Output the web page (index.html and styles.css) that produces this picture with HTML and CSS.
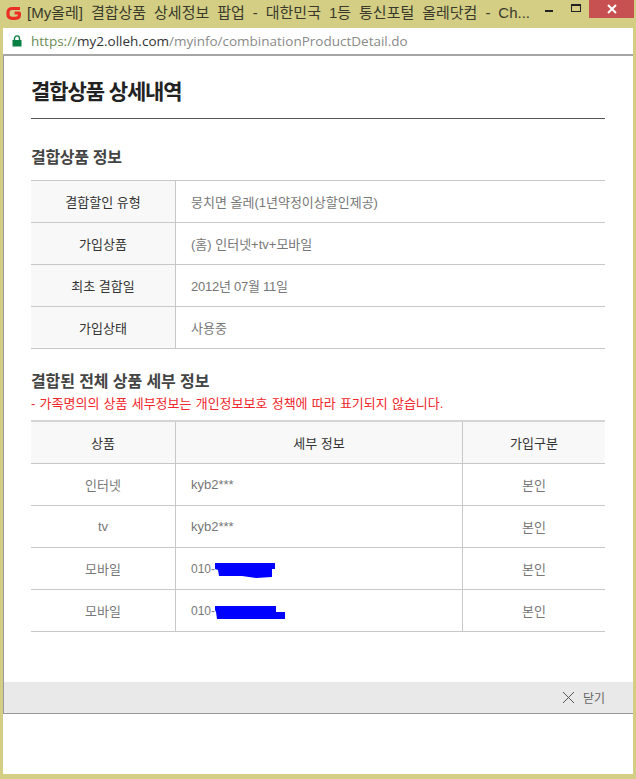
FILE: index.html
```html
<!DOCTYPE html>
<html lang="ko">
<head>
    <meta charset="UTF-8">
    <title>결합상품 상세내역</title>
    <link rel="stylesheet" href="styles.css">
</head>
<body>
<div class="window">
    <div class="titlebar">
        <svg class="app-icon" width="16" height="16" viewBox="0 0 16 16">
            <path d="M14 3.5H6.5Q2 3.5 2 7.5V9.5Q2 13.3 6.5 13.3H9.5Q13.4 13.3 13.4 10V8H8.6" fill="none" stroke="#ec2f26" stroke-width="3.2" stroke-linejoin="round"/>
        </svg>
        <div class="title-text">[My올레] 결합상품 상세정보 팝업 - 대한민국 1등 통신포털 올레닷컴 - Ch...</div>
        <div class="win-buttons">
            <div class="win-min"></div>
            <div class="win-max"></div>
            <div class="win-close">
                <svg width="10" height="10" viewBox="0 0 10 10"><path d="M1 1L9 9M9 1L1 9" stroke="#fff" stroke-width="2"/></svg>
            </div>
        </div>
    </div>
    <div class="urlbar">
        <svg class="lock" width="10" height="12" viewBox="0 0 10 12">
            <path d="M2.5 5V3.4a2.5 2.5 0 0 1 5 0V5" fill="none" stroke="#0b8043" stroke-width="1.4"/>
            <rect x="0.5" y="5" width="9" height="6.5" fill="#0b8043"/>
        </svg>
        <span class="url-scheme">https://</span><span class="url-host">my2.olleh.com</span><span class="url-path">/myinfo/combinationProductDetail.do</span>
    </div>
    <div class="popup">
        <div class="content">
            <h1 class="page-title">결합상품 상세내역</h1>

            <h2 class="section-title first">결합상품 정보</h2>
            <table class="info-table">
                <tr><th>결합할인 유형</th><td>뭉치면 올레(1년약정이상할인제공)</td></tr>
                <tr><th>가입상품</th><td>(홈) 인터넷+tv+모바일</td></tr>
                <tr><th>최초 결합일</th><td class="date">2012년 07월 11일</td></tr>
                <tr><th>가입상태</th><td>사용중</td></tr>
            </table>

            <h2 class="section-title second">결합된 전체 상품 세부 정보</h2>
            <p class="notice">- 가족명의의 상품 세부정보는 개인정보보호 정책에 따라 표기되지 않습니다.</p>
            <table class="detail-table">
                <tr><th class="col-a">상품</th><th class="col-b">세부 정보</th><th class="col-c">가입구분</th></tr>
                <tr><td class="center">인터넷</td><td>kyb2***</td><td class="center">본인</td></tr>
                <tr><td class="center">tv</td><td>kyb2***</td><td class="center">본인</td></tr>
                <tr>
                    <td class="center">모바일</td>
                    <td><span class="phone">010-<svg class="scribble" width="62" height="17" viewBox="0 0 62 17"><path d="M1 1H61V7L58 7V15L42 16L28 14H5L4 8L1 7Z" fill="#0000ff"/></svg></span></td>
                    <td class="center">본인</td>
                </tr>
                <tr>
                    <td class="center">모바일</td>
                    <td><span class="phone">010-<svg class="scribble" width="72" height="15" viewBox="0 0 72 15"><path d="M1 1H62V7H71V14H3L2 7L1 5Z" fill="#0000ff"/></svg></span></td>
                    <td class="center">본인</td>
                </tr>
            </table>
        </div>
        <div class="footer">
            <svg class="close-x" width="13" height="13" viewBox="0 0 13 13"><path d="M1 1L12 12M12 1L1 12" stroke="#555" stroke-width="1" fill="none"/></svg>
            <span class="close-label">닫기</span>
        </div>
    </div>
    <div class="blank"></div>
</div>
</body>
</html>
```

FILE: styles.css
```css
html, body {
    margin: 0;
    padding: 0;
}

body {
    width: 636px;
    height: 779px;
    overflow: hidden;
    font-family: "Liberation Sans", "Noto Sans CJK KR", sans-serif;
}

.window {
    display: flex;
    flex-direction: column;
    width: 636px;
    height: 779px;
    box-sizing: border-box;
    padding: 0 3px 5px 3px;
    background-color: #d3ce84;
}

.titlebar {
    display: flex;
    align-items: flex-start;
    height: 28px;
    flex-shrink: 0;
    margin-left: 3px;
}

.app-icon {
    flex-shrink: 0;
    margin-top: 5px;
}

.title-text {
    margin-left: 5px;
    width: 515px;
    font-size: 15px;
    line-height: 26px;
    word-spacing: 3.8px;
    color: #3a3a2c;
    white-space: nowrap;
}

.win-buttons {
    display: flex;
    align-items: flex-start;
    margin-left: auto;
    margin-right: -1px;
}

.win-min {
    width: 8px;
    height: 2px;
    margin-top: 10px;
    background-color: #222;
}

.win-max {
    width: 8px;
    height: 5px;
    margin-top: 4px;
    margin-left: 18px;
    border: 1px solid #222;
    border-top-width: 2px;
}

.win-close {
    display: flex;
    align-items: center;
    justify-content: center;
    width: 45px;
    height: 18px;
    margin-left: 8px;
    background-color: #c75050;
}

.urlbar {
    display: flex;
    align-items: center;
    height: 26px;
    flex-shrink: 0;
    padding-left: 9px;
    background-color: #fff;
    border-bottom: 2px solid #a5a5a5;
    font-family: "Open Sans", sans-serif;
    font-size: 13.5px;
    line-height: 24px;
}

.lock {
    margin-right: 9px;
}

.url-scheme {
    color: #6b8a55;
}

.url-host {
    color: #333;
}

.url-path {
    color: #8a8a8a;
}

.popup {
    display: flex;
    flex-direction: column;
    height: 658px;
    flex-shrink: 0;
    box-sizing: border-box;
    background-color: #fff;
    border-left: 1px solid #999;
    border-bottom: 1px solid #999;
}

.content {
    flex: 1;
    padding: 0 28px 0 27px;
}

.page-title {
    margin: 0;
    height: 62px;
    line-height: 69px;
    font-family: "Noto Sans CJK KR", sans-serif;
    font-size: 21px;
    font-weight: 700;
    color: #222;
    letter-spacing: -1.1px;
    border-bottom: 1px solid #555;
}

.section-title {
    margin: 0;
    font-family: "Noto Sans CJK KR", sans-serif;
    font-size: 16px;
    font-weight: 700;
    color: #444;
    letter-spacing: -0.3px;
    line-height: 20px;
}

.section-title.first {
    padding-top: 27px;
    padding-bottom: 14px;
}

.section-title.second {
    padding-top: 21px;
    letter-spacing: -0.1px;
}

.notice {
    margin: 0;
    height: 25px;
    padding-top: 5px;
    font-size: 13px;
    line-height: 18px;
    word-spacing: 0.6px;
    color: #f0262c;
}

table {
    width: 574px;
    border-collapse: collapse;
    table-layout: fixed;
    font-size: 13px;
}

th, td {
    height: 41px;
    padding: 0;
    font-weight: 400;
    border-top: 1px solid #c8c8c8;
    border-bottom: 1px solid #c8c8c8;
}

th {
    background-color: #f8f8f8;
    color: #333;
    text-align: center;
}

td {
    padding-left: 15px;
    color: #777;
}

td.date {
    letter-spacing: -0.25px;
}

.info-table th {
    width: 144px;
    border-right: 1px solid #c8c8c8;
}

.detail-table tr:first-child th {
    border-top: 2px solid #d4d4d4;
}

.col-a {
    width: 144px;
    border-right: 1px solid #c8c8c8;
}

.col-b {
    width: 286px;
    border-right: 1px solid #c8c8c8;
}

.detail-table td:nth-child(1), .detail-table td:nth-child(2) {
    border-right: 1px solid #c8c8c8;
}

td.center {
    padding-left: 0;
    text-align: center;
}

.phone {
    display: inline-flex;
    align-items: center;
    font-size: 12px;
}

.scribble {
    margin-left: -1px;
    margin-top: 3px;
}

.footer {
    display: flex;
    align-items: center;
    justify-content: flex-end;
    height: 31px;
    flex-shrink: 0;
    padding-right: 28px;
    background-color: #e9e9e9;
}

.close-x {
    margin-right: 8px;
}

.close-label {
    font-size: 12px;
    color: #666;
}

.blank {
    flex: 1;
    background-color: #fff;
}
```
